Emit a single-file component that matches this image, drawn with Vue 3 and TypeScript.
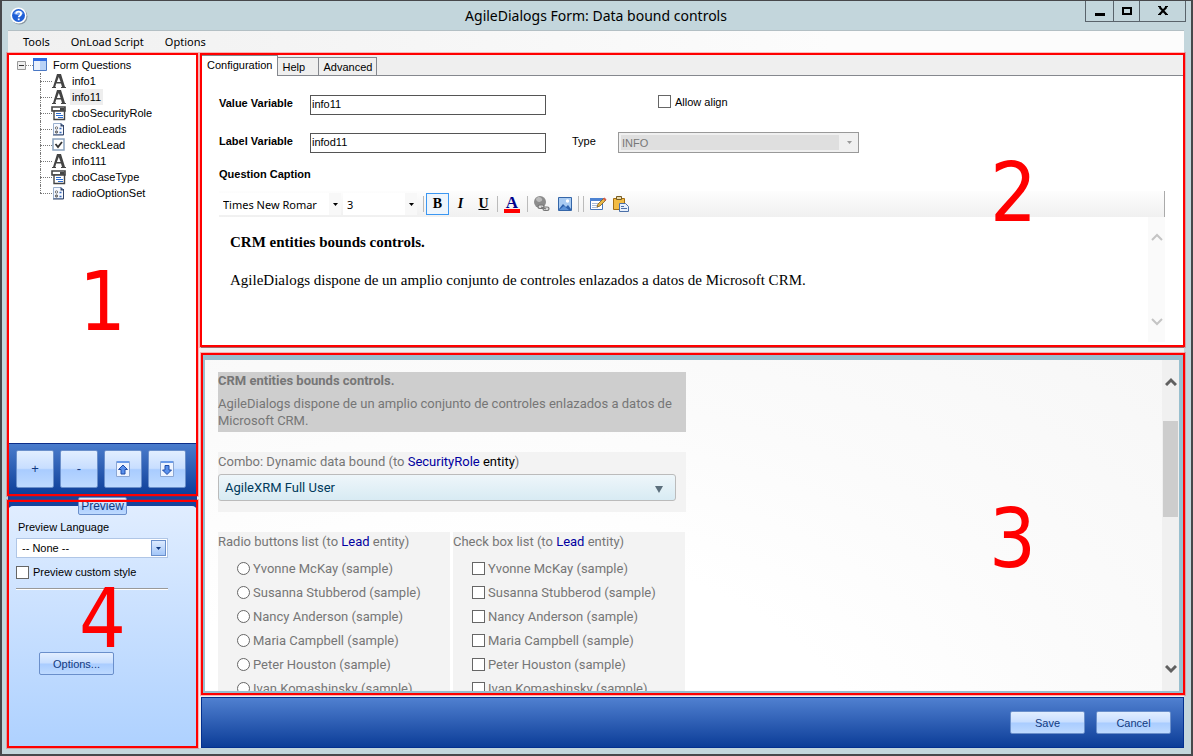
<script setup lang="ts">
import { ref } from 'vue'

type NodeKind = 'text' | 'combo' | 'radio' | 'check'
interface TreeNode { name: string; kind: NodeKind }

const menus = ['Tools', 'OnLoad Script', 'Options']
const nodes: TreeNode[] = [
  { name: 'info1', kind: 'text' },
  { name: 'info11', kind: 'text' },
  { name: 'cboSecurityRole', kind: 'combo' },
  { name: 'radioLeads', kind: 'radio' },
  { name: 'checkLead', kind: 'check' },
  { name: 'info111', kind: 'text' },
  { name: 'cboCaseType', kind: 'combo' },
  { name: 'radioOptionSet', kind: 'radio' },
]
const people = ['Yvonne McKay', 'Susanna Stubberod', 'Nancy Anderson', 'Maria Campbell', 'Peter Houston', 'Ivan Komashinsky']
const tabs = ['Configuration', 'Help', 'Advanced']

const selected = ref('info11')
const activeTab = ref('Configuration')
const valueVariable = ref('info11')
const labelVariable = ref('infod11')
const allowAlign = ref(false)
const customStyle = ref(false)
const lead = ref('')
const leads = ref<string[]>([])
</script>

<template>
  <div class="window">
    <header class="titlebar">
      <svg class="help" width="18" height="18" viewBox="0 0 18 18">
        <circle cx="9.5" cy="9.5" r="8" fill="#8a98a4" />
        <circle cx="8.5" cy="8.5" r="8" fill="#fff" />
        <circle cx="8.5" cy="8.5" r="6.5" fill="#1f5fd6" />
        <path d="M3.5 6.5a5.6 5.6 0 0 1 10 0c-3 2-7 2-10 0z" fill="#6f9df0" />
        <path d="M6.2 6.8c0-3 4.9-3 4.9 0 0 1.9-2.4 1.8-2.4 3.4M8.7 11.4v1.8" fill="none" stroke="#fff" stroke-width="1.8" />
      </svg>
      <h1>AgileDialogs Form: Data bound controls</h1>
      <div class="winbtns">
        <button aria-label="Minimize"><svg width="12" height="12"><path d="M1 8h10v3H1z" /></svg></button>
        <button aria-label="Maximize"><svg width="12" height="12"><path d="M2 3h8v6H2z" fill="none" stroke="#000" stroke-width="2" /></svg></button>
        <button aria-label="Close" class="close"><svg width="12" height="12"><path d="M2.5 2l7 7.500M9.500 2l-7 7.500" stroke="#000" stroke-width="2.200" /><path d="M1 1h3v1H1zM8 1h3v1H8zM1 9h3v1H1zM8 9h3v1H8z" /></svg></button>
      </div>
    </header>

    <nav class="menubar">
      <button v-for="m in menus" :key="m">{{ m }}</button>
    </nav>

    <main class="body">
      <aside class="left">
        <section class="panel tree-panel">
          <div class="tree">
            <div class="root">
              <svg width="32" height="16" viewBox="0 0 32 16">
                <path d="M.5 4.500h8v8h-8z" fill="#eee" stroke="#999" />
                <path d="M2 8.500h5" stroke="#333" />
                <path d="M9 8.500h7" stroke="#888" stroke-dasharray="1 1" />
                <path d="M16 1h14v13H16z" fill="#e8f0fc" />
                <path d="M23 4h6v10h-6z" fill="#b9d2f6" />
                <path d="M16.500 1.500h13v12h-13z" fill="none" stroke="#4a78c4" />
                <path d="M16 1h14v3H16z" fill="#2f6ae0" />
              </svg>
              <span>Form Questions</span>
            </div>
            <ul>
              <li v-for="n in nodes" :key="n.name">
                <svg class="glyph" width="16" height="16" viewBox="0 0 16 16">
                  <path v-if="n.kind === 'text'" fill-rule="evenodd" fill="#444" d="M6 1h4l4 13h1v1h-5v-1h1l-1-3.500H5.200L4.200 14H5v1H1v-1h1zM7.800 4L5.900 9h3.700z" />
                  <g v-else-if="n.kind === 'combo'">
                    <path d="M1 2h13v4H1z" fill="#fff" stroke="#444" stroke-width="1.600" />
                    <path d="M9 3h4.500v2.500H9z" fill="#444" />
                    <path d="M3 6h10.500v8.500H3z" fill="#fff" stroke="#444" stroke-width="1.400" />
                    <path d="M5 8.500h5M7 12.500h5" stroke="#2b6cd0" />
                    <path d="M5 10.500h7" stroke="#2b6cd0" />
                  </g>
                  <g v-else-if="n.kind === 'radio'">
                    <path d="M2.500 2.500h8l2 2v9h-10z" fill="#f6f9ff" stroke="#9bb0cf" />
                    <path d="M12.500 4v10H2" fill="none" stroke="#33466a" />
                    <path d="M9.500 2v3.500H13z" fill="#33466a" />
                    <circle cx="5.500" cy="7" r="1.200" fill="#fff" stroke="#555" stroke-width=".8" />
                    <circle cx="5.500" cy="11" r="1.200" fill="#999" stroke="#555" stroke-width=".8" />
                    <path d="M8.500 7.500h2M8.500 11.500h2" stroke="#3367b8" stroke-width="1.500" />
                  </g>
                  <g v-else>
                    <path d="M2 2h11v11H2z" fill="#fff" stroke="#8ba3bf" stroke-width="1.500" />
                    <path d="M4.500 7l2.500 3L11 5" fill="none" stroke="#333" stroke-width="1.800" />
                  </g>
                </svg>
                <button :class="{ on: selected === n.name }" @click="selected = n.name">{{ n.name }}</button>
              </li>
            </ul>
          </div>
          <div class="actions">
            <button class="blue">+</button>
            <button class="blue">-</button>
            <button class="blue" aria-label="Move up">
              <svg width="14" height="16" viewBox="0 0 14 16"><path d="M.5.5h13v15H.5z" fill="#eef4ff" stroke="#8ba6d2" /><path d="M1 0h12v2H1z" fill="#6b9be8" /><path d="M7 4l4.500 4.500H9V13H5V8.500H2.500z" fill="#5a90ec" stroke="#1f4ca8" /></svg>
            </button>
            <button class="blue" aria-label="Move down">
              <svg width="14" height="16" viewBox="0 0 14 16"><path d="M.5.5h13v15H.5z" fill="#eef4ff" stroke="#8ba6d2" /><path d="M1 0h12v2H1z" fill="#6b9be8" /><path d="M7 13.500L2.500 9H5V4.500h4V9h2.500z" fill="#5a90ec" stroke="#1f4ca8" /></svg>
            </button>
          </div>
          <span class="mark">1</span>
        </section>

        <section class="panel options-panel">
          <button class="blue preview-tab">Preview</button>
          <div class="sheet">
            <label for="lang">Preview Language</label>
            <span class="pick lang">
              <select id="lang"><option>-- None --</option></select>
              <span class="drop"><svg width="5" height="3"><path d="M0 0h5L2.500 3z" fill="#123a80" /></svg></span>
            </span>
            <label class="tick"><input v-model="customStyle" type="checkbox" />Preview custom style</label>
            <hr />
            <button class="blue wide opt">Options...</button>
          </div>
          <span class="mark">4</span>
        </section>
      </aside>

      <div class="right">
        <section class="panel config">
          <div class="tabs">
            <button v-for="t in tabs" :key="t" :class="{ on: activeTab === t }" @click="activeTab = t">{{ t }}</button>
          </div>
          <div class="fields">
            <label class="strong" for="vv">Value Variable</label>
            <input id="vv" v-model="valueVariable" type="text" />
            <label class="tick allow"><input v-model="allowAlign" type="checkbox" />Allow align</label>
            <label class="strong" for="lv">Label Variable</label>
            <input id="lv" v-model="labelVariable" type="text" />
            <label class="type" for="ty">Type</label>
            <span class="pick typepick">
              <select id="ty" disabled><option>INFO</option></select>
              <svg width="5" height="3"><path d="M0 0h5L2.500 3z" fill="#999" /></svg>
            </span>
          </div>
          <h2>Question Caption</h2>
          <div class="tools">
            <span class="pick font"><select aria-label="Font"><option>Times New Romar</option></select><span class="arrow"><svg width="5" height="3"><path d="M0 0h5L2.500 3z" /></svg></span></span>
            <span class="pick size"><select aria-label="Size"><option>3</option></select><span class="arrow"><svg width="5" height="3"><path d="M0 0h5L2.500 3z" /></svg></span></span>
            <i class="sep"></i>
            <button class="bold">B</button>
            <button class="ital">I</button>
            <button class="under">U</button>
            <i class="sep"></i>
            <button class="color">A</button>
            <i class="sep"></i>
            <button aria-label="Link">
              <svg width="18" height="18" viewBox="0 0 18 18"><circle cx="7" cy="7" r="6" fill="#8c8c8c" /><path d="M3 4c2-3 5-2 6 0s-2 3-3 3-3-1-3-3z" fill="#bbb" /><g fill="#ddd" stroke="#777" stroke-width="1.200"><rect x="5" y="10" width="6" height="3.500" rx="1.700" /><rect x="10" y="12" width="6" height="3.500" rx="1.700" /><path d="M8 12l5 2" /></g></svg>
            </button>
            <button aria-label="Picture">
              <svg width="16" height="16" viewBox="0 0 16 16"><path d="M1.500 1.500h13v13h-13z" fill="#a9cbf2" stroke="#3566a8" /><path d="M2 13l4-5 3 3 2-2 3 4v1H2z" fill="#2e62ac" /><path d="M2 14l5-4 5 4z" fill="#5d93d8" /><circle cx="10.500" cy="5" r="1.700" fill="#fff" /></svg>
            </button>
            <i class="sep"></i><i class="sep"></i>
            <button aria-label="Edit">
              <svg width="18" height="16" viewBox="0 0 18 16"><path d="M1.500 2.500h12v11h-12z" fill="#fff" stroke="#4676ba" /><path d="M1 2h13v3H1z" fill="#4d83d2" /><path d="M3 7.500h6M3 9.500h5M3 11.500h6" stroke="#a9bcd8" /><path d="M8 11l1-3 6-6 2 2-6 6z" fill="#e9b949" stroke="#7c5a1c" stroke-width=".8" /><path d="M14 3l1.500-1.500 2 2L16 5z" fill="#d65a4a" /></svg>
            </button>
            <button aria-label="Paste">
              <svg width="18" height="16" viewBox="0 0 18 16"><path d="M1.500 2.500h11v11h-11z" fill="#f2bc45" stroke="#a26e14" /><path d="M4.500.5h5v3h-5z" fill="#e9d9a8" stroke="#775c22" /><path d="M7.500 7.500h6l3 3v5h-9z" fill="#e7f0fc" stroke="#4c70a8" /><path d="M9 10.500h3M9 12.500h6" stroke="#4c70a8" /></svg>
            </button>
          </div>
          <div class="editor">
            <div class="doc">
              <p><b>CRM entities bounds controls.</b></p>
              <p>AgileDialogs dispone de un amplio conjunto de controles enlazados a datos de Microsoft CRM.</p>
            </div>
            <div class="scroll pale">
              <svg width="12" height="8"><path d="M1 7l5-5 5 5" /></svg>
              <svg width="12" height="8"><path d="M1 1l5 5 5-5" /></svg>
            </div>
          </div>
          <span class="mark">2</span>
        </section>

        <section class="panel view">
          <div class="page">
            <div class="note">
              <b>CRM entities bounds controls.</b>
              <p>AgileDialogs dispone de un amplio conjunto de controles enlazados a datos de Microsoft CRM.</p>
            </div>
            <div class="combo">
              <label for="role">Combo: Dynamic data bound (to <em>SecurityRole</em> <span>entity</span>)</label>
              <span class="pick role">
                <select id="role"><option>AgileXRM Full User</option></select>
                <svg width="8" height="7"><path d="M0 0h8L4 7z" fill="#5c6f7c" /></svg>
              </span>
            </div>
            <div class="lists">
              <fieldset>
                <legend>Radio buttons list (to <em>Lead</em> entity)</legend>
                <label v-for="p in people" :key="p"><input v-model="lead" type="radio" name="lead" :value="p" />{{ p }} (sample)</label>
              </fieldset>
              <fieldset>
                <legend>Check box list (to <em>Lead</em> entity)</legend>
                <label v-for="p in people" :key="p"><input v-model="leads" type="checkbox" :value="p" />{{ p }} (sample)</label>
              </fieldset>
            </div>
          </div>
          <div class="scroll">
            <svg width="12" height="9"><path d="M1 8l5-5 5 5" /></svg>
            <i class="thumb"></i>
            <svg width="12" height="9"><path d="M1 1l5 5 5-5" /></svg>
          </div>
          <span class="mark">3</span>
        </section>

        <footer>
          <button class="blue wide">Save</button>
          <button class="blue wide">Cancel</button>
        </footer>
      </div>
    </main>
  </div>
</template>

<style>
body { margin: 0; }
</style>

<style scoped>
* { box-sizing: border-box; }
.window {
  height: 100vh; min-height: 640px; display: flex; flex-direction: column;
  border: 2px solid #47484b; border-top-width: 1px; background: #c3d6dc;
  padding: 0 7px 6px 6px;
  font: 11px/16px "Liberation Sans", Arial, sans-serif; color: #000; overflow: hidden;
}
button, input, select { font: inherit; color: inherit; margin: 0; padding: 0; border-radius: 0; }
button { background: none; border: 0; display: flex; align-items: center; justify-content: center; }
select { appearance: none; background: transparent; border: 0; width: 100%; height: 100%; outline: 0; opacity: 1; }
input[type="checkbox"], input[type="radio"] {
  appearance: none; width: 13px; height: 13px; border: 1px solid #666; background: #fff; flex: none;
}
svg { display: block; flex: none; }

.titlebar { display: grid; grid-template-columns: 1fr auto 1fr; height: 29px; flex: none; }
.help { margin: 6px 0 0 2px; }
.titlebar h1 { margin: 0; font: 14px/29px "Noto Sans", sans-serif; }
.winbtns { justify-self: end; display: flex; height: 21px; margin-right: -2px; border: 1px solid #59636b; border-top: 0; }
.winbtns button { width: 28px; border-right: 1px solid #59636b; }
.winbtns button + button { width: 26px; }
.winbtns button.close { width: 45px; border-right: 0; }

.menubar {
  display: flex; gap: 21px; padding-left: 15px; height: 23px; flex: none;
  border-top: 1px solid #b3bfc4; background: linear-gradient(90deg, #f0f0f0, #fcfcfc 70%);
  font: 11px/24px "Noto Sans", sans-serif;
}

.body { flex: 1; min-height: 0; display: flex; gap: 4px; background: #f0f0f0; }
.left { width: 189px; flex: none; display: flex; flex-direction: column; gap: 4px; background: #16449c; }
.right { flex: 1; min-width: 0; display: flex; flex-direction: column; }
.panel { position: relative; display: flex; flex-direction: column; }
.panel::after {
  content: ""; position: absolute; inset: 0 -1px 0 -1px; border: 2px solid #f00;
  box-shadow: 0 0 0 1px #ff000040; pointer-events: none;
}
.mark {
  position: absolute; z-index: 1; font: 82px/82px "DejaVu Sans Condensed", "DejaVu Sans", sans-serif;
  color: #f00; pointer-events: none;
}

.blue {
  color: #123a80; border: 1px solid #6a8fcb; border-radius: 2px;
  background: linear-gradient(#e2eeff, #c8deff 48%, #a9ccff 52%, #bedaff);
}
.blue.wide { width: 75px; height: 23px; }

.tree-panel { flex: 1; min-height: 0; }
.tree { flex: 1; min-height: 0; background: #fff; padding: 4px 0 0 9px; }
.root { display: flex; gap: 4px; }
.tree ul { list-style: none; margin: 0 0 0 23px; padding: 0; }
.tree li { display: flex; height: 16px; position: relative; padding-left: 11px; gap: 3px; }
.tree li::before { content: ""; position: absolute; left: 0; top: 8px; width: 12px; border-top: 1px dotted #777; }
.tree li::after { content: ""; position: absolute; left: 0; top: 0; height: 16px; border-left: 1px dotted #777; }
.tree li:last-child::after { height: 8px; }
.tree li button { padding: 0 2px; }
.tree li button.on { background: #eee; }
.actions {
  height: 53px; flex: none; display: flex; gap: 6px; padding: 6px 0 0 8px; align-items: flex-start;
  border-top: 1px solid #0c2e8a; background: linear-gradient(#4a7ccc, #0c3d98);
}
.actions .blue { width: 38px; height: 38px; font-size: 13px; }
.tree-panel .mark { left: 71px; top: 208px; }

.options-panel { height: 248px; flex: none; padding-top: 6px; background: #16449c; }
.preview-tab { position: absolute; left: 70px; top: -3px; width: 49px; height: 18px; font-size: 12px; }
.sheet {
  flex: 1; display: flex; flex-direction: column; align-items: flex-start;
  padding: 13px 8px 0; border-radius: 5px; background: linear-gradient(#e0edff, #aed1ff);
}
.sheet > label:first-child { padding-left: 2px; }
.pick { position: relative; display: block; }
.lang { width: 152px; height: 20px; margin-top: 3px; border: 1px solid #b0c6e6; background: #fff; }
.lang select { padding-left: 5px; }
.drop {
  position: absolute; right: 1px; top: 1px; width: 15px; height: 16px; display: grid; place-items: center;
  border: 1px solid #6a8fcb; background: linear-gradient(#dceaff, #a3c6f8); pointer-events: none;
}
.tick { display: flex; align-items: center; gap: 4px; }
.sheet .tick { margin-top: 6px; }
.sheet hr { width: 152px; margin: 8px 0 0; border: 0; border-top: 1px solid #999; border-bottom: 1px solid #fff; }
.opt { margin: 62px 0 0 23px; }
.options-panel .mark { left: 71px; top: 78px; }

.config { height: 295px; flex: none; background: #fff; border-bottom: 1px solid #85888e; }
.tabs { height: 23px; flex: none; display: flex; align-items: flex-end; padding-left: 1px; background: #efefef; border-bottom: 1px solid #85888e; }
.tabs button { height: 18px; padding: 0 4px; border: 1px solid #85888e; border-width: 1px 1px 0 0; }
.tabs button:nth-child(2) { width: 41px; justify-content: flex-start; }
.tabs button.on { height: 21px; margin-bottom: -1px; padding: 0 5px 2px; background: #fff; }
.fields {
  display: grid; grid-template-columns: 91px 236px 26px 46px 40px 201px; grid-template-rows: 20px 20px; row-gap: 18px;
  padding: 19px 0 0 18px; align-items: start;
}
.strong, h2 { font-weight: bold; font-size: 11px; }
.fields input[type="text"] { height: 20px; width: 100%; border: 1px solid #555; padding: 0 1px 2px; outline: 0; }
.allow { grid-column: 6; height: 13px; }
.type { grid-column: 4; grid-row: 2; }
.typepick { grid-column: 5 / -1; grid-row: 2; align-self: end; height: 21px; background: #f0f0f0; border: 1px solid #999; padding: 2px 19px 2px 2px; }
.typepick select { background: #dfdfdf; color: #777; padding-left: 1px; }
.typepick svg { position: absolute; right: 6px; top: 8px; }
h2 { margin: 13px 18px 9px; line-height: 16px; }
.tools {
  display: flex; align-items: center; height: 26px; flex: none; margin: 0 19px 0 18px;
  background: linear-gradient(#fdfdfd, #f0f0f0); border-right: 1px solid #aaa; font: 11px "Noto Sans", sans-serif;
}
.font { width: 122px; height: 22px; margin-right: 2px; background: #fff; }
.size { width: 74px; height: 22px; margin-right: 4px; background: #fff; }
.tools select { padding-left: 4px; }
.arrow { position: absolute; right: 0; top: 0; width: 12px; height: 22px; display: grid; place-items: center; background: #f8f8f8; pointer-events: none; }
.sep { width: 1px; height: 16px; margin: 0 2px; background: #bbb; }
.tools button { width: 23px; height: 22px; font: bold 14px/18px "Liberation Serif", serif; }
.tools .bold { border: 1px solid #3b97f2; background: #eef5fc; }
.tools .ital { font-style: italic; }
.tools .under { text-decoration: underline; }
.tools .color { width: 16px; height: 17px; margin: 0 5px 0 4px; font-size: 17px; line-height: 13px; color: #00008b; border-bottom: 4px solid #f00; }
.editor { flex: 1; min-height: 0; display: flex; margin: 0 19px 5px 18px; }
.doc { flex: 1; padding: 15px 11px; font: 15px/20px "Liberation Serif", serif; }
.doc p { margin: 0 0 18px; }
.scroll {
  width: 17px; flex: none; display: flex; flex-direction: column; align-items: center; justify-content: space-between;
  padding: 16px 0; background: #f0f0f0;
}
.scroll path { fill: none; stroke: #606060; stroke-width: 3; }
.scroll.pale { background: #fafafa; }
.scroll.pale path { stroke: #c4c4c4; stroke-width: 2; }
.config .mark { left: 789px; top: 99px; }

.view {
  flex: 1; min-height: 0; margin-top: 5px; flex-direction: row;
  border: solid #98bfce; border-width: 7px 5px 4px 4px;
}
.page {
  flex: 1; min-width: 0; overflow: hidden; padding: 12px 13px 0; color: #767676;
  background: radial-gradient(ellipse at 30% 130%, #fff 40%, #fbfbfb 65%, #f7f7f7);
  font: 13px/17px Roboto, sans-serif;
}
.note { max-width: 468px; height: 60px; background: #cecece; }
.note b { display: block; line-height: 18px; }
.note p { margin: 5px 0 0; }
.combo { max-width: 468px; height: 60px; margin-top: 20px; background: #f3f3f3; }
.combo label { display: block; height: 22px; line-height: 19px; }
.page em { font-style: normal; color: #0000a0; }
.combo label span { color: #000; }
.role { width: 458px; height: 27px; border: 1px solid #bbb; border-radius: 3px; background: linear-gradient(#eef6fa, #d8ebf3); }
.role select { color: #003a5c; padding-left: 6px; }
.role svg { position: absolute; right: 12px; top: 11px; }
.lists { display: grid; grid-template-columns: 232px 232px; gap: 3px; margin-top: 20px; }
fieldset { border: 0; margin: 0; padding: 0; min-width: 0; background: #f3f3f3; }
legend { float: left; width: 100%; padding: 0; line-height: 20px; margin-bottom: 4px; }
fieldset label { clear: left; display: flex; align-items: center; gap: 3px; height: 24px; padding-left: 19px; }
fieldset input[type="radio"] { border-radius: 50%; }
.view .scroll { position: relative; padding: 17px 0; }
.thumb { position: absolute; left: 1px; right: 1px; top: 61px; height: 96px; background: #cdcdcd; }
.view .mark { left: 784px; top: 138px; }
.view::after { inset: -7px -6px -4px -4px; }

footer {
  height: 51px; flex: none; margin-top: 2px; display: flex; justify-content: flex-end; gap: 11px; align-items: center;
  padding-right: 12px; border: 1px solid #03308f; background: linear-gradient(#5080d0, #0c3d98);
}
</style>
